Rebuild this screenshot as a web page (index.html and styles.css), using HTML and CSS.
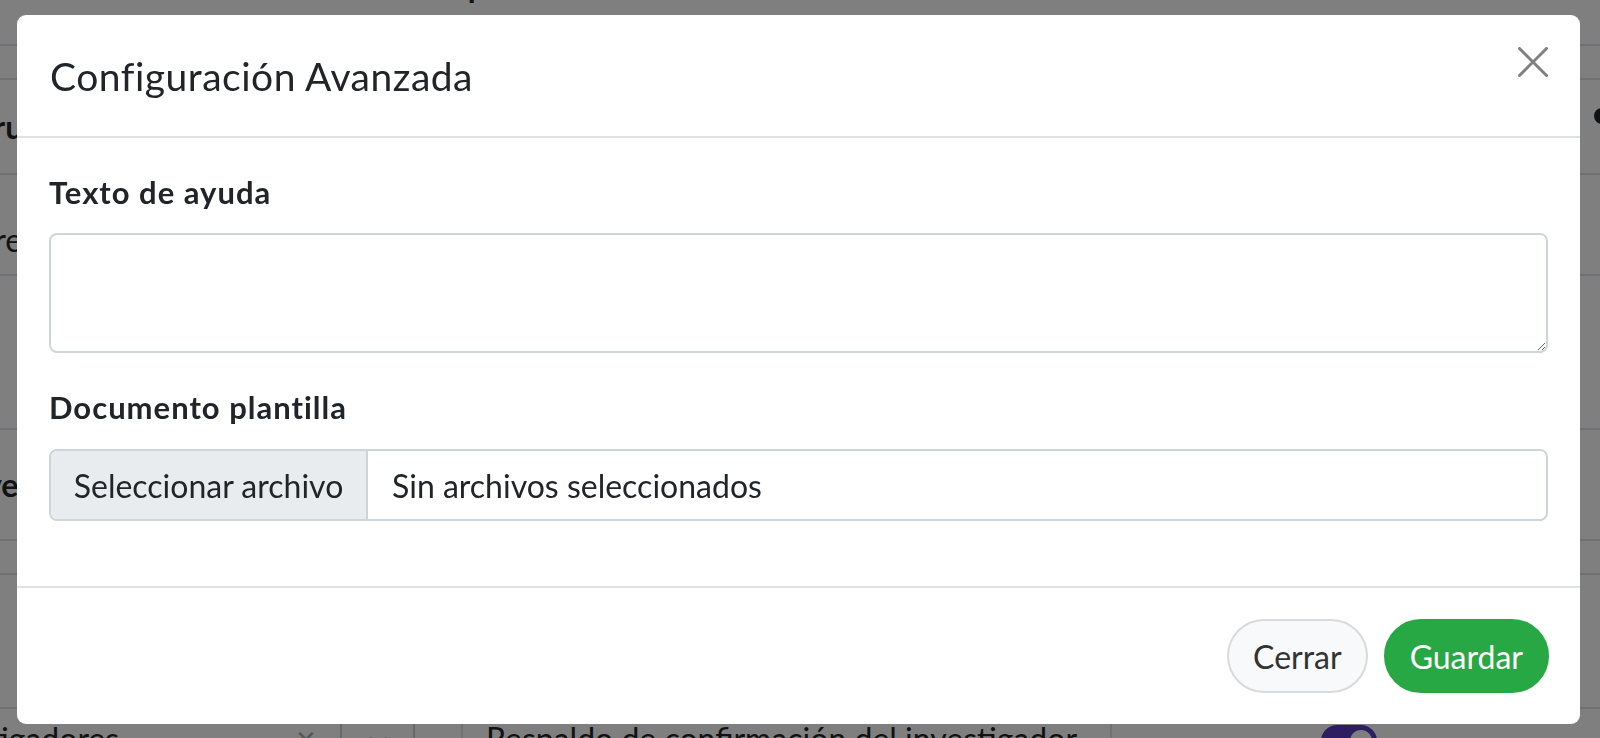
FILE: index.html
```html
<!DOCTYPE html>
<html lang="es">
<head>
<meta charset="UTF-8">
<meta name="viewport" content="width=device-width, initial-scale=1.0">
<title>Configuración Avanzada</title>
<link rel="stylesheet" href="styles.css">
</head>
<body>

<div class="page">
    <div class="page-top"><h2>Editar campo</h2></div>
    <div class="row row-thin"></div>
    <div class="row row-head">
        <span class="cell-text bold">Instrucciones</span>
        <span class="row-icon"></span>
    </div>
    <div class="row row-name"><span class="cell-text shift">Nombre</span></div>
    <div class="row row-empty"></div>
    <div class="row row-section"><span class="cell-text bold">Clave</span></div>
    <div class="row row-thin"></div>
    <div class="row row-spacer"></div>
    <div class="row row-last">
        <span class="last-name">Investigadores</span>
        <span class="clear-ind">&#x2715;</span>
        <span class="drop-ind">
            <svg width="18" height="10" viewBox="0 0 18 10">
                <path d="M1.5 1.5 L9 8.5 L16.5 1.5" stroke="#a8adb3" stroke-width="2.5" fill="none" stroke-linecap="round"/>
            </svg>
        </span>
        <span class="cell-gap"></span>
        <span class="last-desc">Respaldo de confirmación del investigador</span>
        <span class="toggle"><span class="knob"></span></span>
    </div>
</div>

<div class="backdrop"></div>

<div class="modal">
    <div class="modal-header">
        <h5 class="modal-title">Configuración Avanzada</h5>
        <button class="close" type="button" aria-label="Cerrar">
            <svg width="30" height="30" viewBox="0 0 30 30">
                <path d="M1.5 1.5 L28.5 28.5 M28.5 1.5 L1.5 28.5" stroke="#7f7f7f" stroke-width="3" stroke-linecap="round" fill="none"/>
            </svg>
        </button>
    </div>
    <div class="modal-body">
        <div class="form-group">
            <label class="form-label">Texto de ayuda</label>
            <textarea class="form-control"></textarea>
        </div>
        <div class="form-group">
            <label class="form-label">Documento plantilla</label>
            <div class="file-input">
                <span class="file-btn">Seleccionar archivo</span>
                <span class="file-name">Sin archivos seleccionados</span>
            </div>
        </div>
    </div>
    <div class="modal-footer">
        <button class="btn btn-light" type="button">Cerrar</button>
        <button class="btn btn-success" type="button">Guardar</button>
    </div>
</div>

</body>
</html>
```

FILE: styles.css
```css
* {
    margin: 0;
    padding: 0;
    box-sizing: border-box;
}

body {
    font-family: Lato, "Liberation Sans", sans-serif;
    color: #212529;
    background: #fff;
    overflow: hidden;
}

/* page behind the modal */
.page {
    margin-left: -60px;
    width: 1720px;
    font-size: 32px;
}

.page-top {
    height: 46px;
    border-bottom: 2px solid #dee2e6;
    overflow: hidden;
}

.page-top h2 {
    font-size: 32px;
    font-weight: 700;
    line-height: 40px;
    margin-top: -34px;
    padding-left: 378px;
}

.row {
    display: flex;
    align-items: center;
    border-bottom: 2px solid #dee2e6;
}

.row-thin { height: 34px; }
.row-head { height: 95px; }
.row-name { height: 101px; padding-top: 30px; }
.row-empty { height: 154px; }
.row-section { height: 111px; padding-left: 0; }
.row-spacer { height: 134px; }

.cell-text.bold {
    font-weight: 700;
}

.cell-text.shift {
    margin-left: -32px;
}

.row-icon {
    margin-left: auto;
    margin-right: 50px;
    align-self: flex-start;
    margin-top: 28px;
    width: 16px;
    height: 16px;
    border-radius: 50%;
    background: #212529;
}

.row-last {
    height: 60px;
    align-items: flex-start;
    padding-top: 10px;
    border-bottom: none;
}

.last-name {
    width: 332px;
    text-indent: -24px;
    white-space: nowrap;
}

.clear-ind {
    width: 68px;
    color: #a8adb3;
    text-align: center;
    font-size: 26px;
    padding-top: 4px;
}

.drop-ind {
    width: 73px;
    height: 50px;
    display: flex;
    justify-content: center;
    padding-top: 18px;
    border-left: 2px solid #ced4da;
}

.drop-ind svg {
    display: block;
}

.cell-gap {
    width: 50px;
    height: 50px;
    border-left: 2px solid #ced4da;
    border-right: 2px solid #dee2e6;
}

.last-desc {
    width: 649px;
    padding-left: 23px;
    height: 50px;
    border-right: 2px solid #dee2e6;
    white-space: nowrap;
}

.toggle {
    margin-left: 209px;
    margin-top: 6px;
    width: 56px;
    height: 32px;
    border-radius: 16px;
    background: #5b3cc4;
    display: flex;
    justify-content: flex-end;
    padding: 5px;
}

.knob {
    width: 22px;
    height: 22px;
    border-radius: 50%;
    background: #fff;
}

/* modal */
.backdrop {
    position: fixed;
    inset: 0;
    background: rgba(0, 0, 0, 0.5);
}

.modal {
    position: fixed;
    left: 17px;
    top: 15px;
    width: 1563px;
    background: #fff;
    border-radius: 9px;
}

.modal-header {
    display: flex;
    justify-content: space-between;
    align-items: flex-start;
    padding: 32px 32px 31px 33px;
    border-bottom: 2px solid #dee2e6;
}

.modal-title {
    font-size: 39px;
    font-weight: 400;
    letter-spacing: 0.5px;
    line-height: 58px;
}

.close {
    border: none;
    background: none;
    width: 30px;
    height: 30px;
    display: block;
}

.close svg {
    display: block;
}

.modal-body {
    padding: 32px 32px 33px 32px;
}

.form-group {
    margin-bottom: 32px;
}

.form-label {
    display: block;
    font-size: 31px;
    font-weight: 700;
    letter-spacing: 1px;
    line-height: 45px;
    margin-bottom: 18px;
}

.form-group + .form-group .form-label {
    margin-bottom: 19px;
}

.form-control {
    display: block;
    width: 100%;
    height: 120px;
    border: 2px solid #ced4da;
    border-radius: 8px;
    resize: vertical;
    font-family: inherit;
    font-size: 32px;
}

.file-input {
    display: flex;
    height: 72px;
    border: 2px solid #ced4da;
    border-radius: 8px;
    overflow: hidden;
    font-size: 32px;
}

.file-btn {
    width: 317px;
    background: #e9ecef;
    border-right: 2px solid #ced4da;
    display: flex;
    align-items: center;
    justify-content: center;
}

.file-name {
    display: flex;
    align-items: center;
    padding-left: 24px;
}

.modal-footer {
    display: flex;
    justify-content: flex-end;
    gap: 16px;
    padding: 31px 31px 31px 32px;
    border-top: 2px solid #dee2e6;
}

.btn {
    height: 74px;
    padding: 0 24px;
    border-radius: 37px;
    font-family: inherit;
    font-size: 32px;
    border: 2px solid transparent;
}

.btn-light {
    background: #f8f9fa;
    border-color: #dadada;
    color: #333;
}

.btn-success {
    background: #28a745;
    border-color: #28a745;
    color: #fff;
}
```
